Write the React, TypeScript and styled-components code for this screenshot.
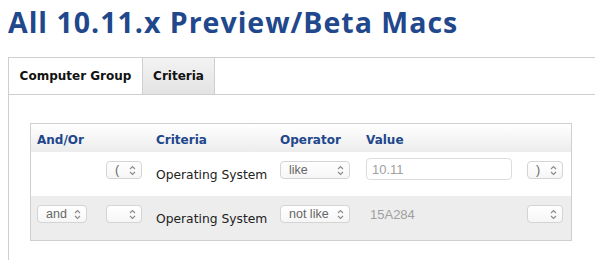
import React from 'react'
import styled, { createGlobalStyle } from 'styled-components'

const GlobalStyle = createGlobalStyle`
  body {
    margin: 0;
    background: #fff;
    font-family: "DejaVu Sans", "Liberation Sans", sans-serif;
  }
`

const Page = styled.div`
  width: 595px;
  height: 260px;
  overflow: hidden;
`

const Title = styled.h1`
  margin: 0;
  padding: 4px 0 0 8px;
  height: 57px;
  box-sizing: border-box;
  font-family: "Open Sans", sans-serif;
  font-weight: 700;
  font-size: 28.5px;
  line-height: 36px;
  color: #21478c;
  letter-spacing: 1px;
`

const Panel = styled.div`
  margin-left: 8px;
  border-top: 1px solid #cfcfcf;
  border-left: 1px solid #cfcfcf;
  height: 220px;
`

const TabBar = styled.div`
  display: flex;
  height: 36px;
  border-bottom: 1px solid #cfcfcf;
`

const Tab = styled.div<{ width: number; active?: boolean }>`
  display: flex;
  align-items: center;
  justify-content: center;
  width: ${p => p.width}px;
  border-right: 1px solid #cfcfcf;
  font-size: 12px;
  font-weight: 700;
  color: #111;
  background: ${p => (p.active ? 'linear-gradient(#f3f3f3, #e3e3e3)' : '#fff')};
`

const Content = styled.div`
  padding: 28px 0 0 21px;
`

const Table = styled.div`
  width: 540px;
  border: 1px solid #cfcfcf;
`

const Row = styled.div<{ kind: 'head' | 'light' | 'dark' }>`
  display: grid;
  grid-template-columns: 69px 50px 124px 86px 161px 1fr;
  align-items: center;
  padding-left: 6px;
  height: ${p => (p.kind === 'head' ? 28 : 44)}px;
  background: ${p =>
    p.kind === 'head' ? 'linear-gradient(#ffffff, #ececec)' : p.kind === 'dark' ? '#ededed' : '#fff'};
`

const HeadCell = styled.div`
  font-size: 12px;
  font-weight: 700;
  color: #21478c;
  padding-top: 3px;
`

const Label = styled.div`
  font-size: 12.3px;
  color: #222;
  padding-top: 2px;
`

const SelectBox = styled.div<{ w: number }>`
  display: flex;
  align-items: center;
  justify-content: space-between;
  box-sizing: border-box;
  width: ${p => p.w}px;
  height: 18px;
  margin-bottom: 8px;
  padding: 0 5px 0 8px;
  border: 1px solid #d4d4d4;
  border-radius: 4px;
  background: linear-gradient(#ffffff, #f6f6f6);
  font-family: "Liberation Sans", sans-serif;
  font-size: 12.5px;
  color: #666;
`

const ValueInput = styled.div`
  box-sizing: border-box;
  width: 146px;
  height: 22px;
  margin-bottom: 10px;
  padding: 3px 0 0 5px;
  border: 1px solid #dcdcdc;
  border-radius: 4px;
  background: #fff;
  font-family: "Liberation Sans", sans-serif;
  font-size: 13px;
  color: #a0a0a0;
`

const ValueText = styled.div`
  margin-bottom: 8px;
  padding-left: 4px;
  font-family: "Liberation Sans", sans-serif;
  font-size: 13px;
  color: #a0a0a0;
`

const Chevrons = () => (
  <svg width="7" height="11" viewBox="0 0 7 11" fill="none" stroke="#8a8a8a" strokeWidth="1.1">
    <path d="M1 4 L3.5 1.5 L6 4" />
    <path d="M1 7 L3.5 9.5 L6 7" />
  </svg>
)

function Select({ w, value }: { w: number; value?: string }) {
  return (
    <SelectBox w={w}>
      <span>{value}</span>
      <Chevrons />
    </SelectBox>
  )
}

export default function App() {
  return (
    <Page>
      <GlobalStyle />
      <Title>All 10.11.x Preview/Beta Macs</Title>
      <Panel>
        <TabBar>
          <Tab width={133}>Computer Group</Tab>
          <Tab width={71} active>
            Criteria
          </Tab>
        </TabBar>
        <Content>
          <Table>
            <Row kind="head">
              <HeadCell>And/Or</HeadCell>
              <div />
              <HeadCell>Criteria</HeadCell>
              <HeadCell>Operator</HeadCell>
              <HeadCell>Value</HeadCell>
              <div />
            </Row>
            <Row kind="light">
              <div />
              <Select w={36} value="(" />
              <Label>Operating System</Label>
              <Select w={70} value="like" />
              <ValueInput>10.11</ValueInput>
              <Select w={36} value=")" />
            </Row>
            <Row kind="dark">
              <Select w={50} value="and" />
              <Select w={36} />
              <Label>Operating System</Label>
              <Select w={70} value="not like" />
              <ValueText>15A284</ValueText>
              <Select w={36} />
            </Row>
          </Table>
        </Content>
      </Panel>
    </Page>
  )
}
